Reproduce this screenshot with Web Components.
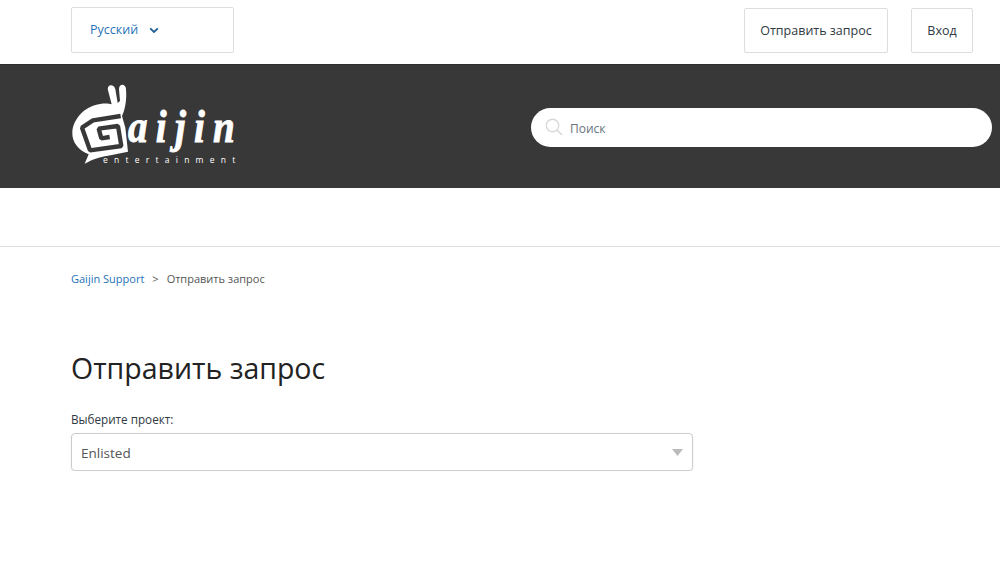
<!DOCTYPE html>
<html lang="ru"><head><meta charset="utf-8"><title>Отправить запрос</title>
<style>
html,body{margin:0;padding:0;background:#fff;font-family:"Open Sans","Noto Sans",sans-serif;overflow:hidden}
</style></head><body>
<g-top></g-top><g-hero></g-hero><g-crumbs></g-crumbs><g-form></g-form>
<script>
function def(n,html){customElements.define(n,class extends HTMLElement{constructor(){super();this.attachShadow({mode:'open'}).innerHTML=html}})}
const btn=`display:flex;align-items:center;justify-content:center;box-sizing:border-box;border:1px solid #ddd;border-radius:2px;background:#fff;height:46px;font-size:12.5px;color:#2f3941;`;
def('g-top',`<style>:host{display:flex;height:64px;box-sizing:border-box;padding:7px 27px 0 71px;align-items:flex-start}
.l{${btn}width:163px;justify-content:flex-start;padding:0 0 1px 18px;color:#1f73b7;gap:11px}
.a{${btn}width:144px;margin-left:auto;margin-top:1px;height:45px}.b{${btn}width:62px;margin-left:23px;margin-top:1px;height:45px}
svg{display:block;margin-top:2px}</style>
<div class="l">Русский<svg width="10" height="7" viewBox="0 0 10 7"><path d="M1.2 1.3 5 5 8.8 1.3" fill="none" stroke="#1f5f96" stroke-width="1.8"/></svg></div>
<div class="a">Отправить запрос</div><div class="b">Вход</div>`);
def('g-logo',`<style>:host{display:block;width:190px;height:110px;position:relative;color:#fff}
svg{position:absolute;left:8px;top:10px}
.w{position:absolute;left:68px;top:28px;font:italic 700 46px/56px "Liberation Serif",serif;-webkit-text-stroke:.9px #fff;letter-spacing:9.7px;transform:scaleX(.85);transform-origin:left;white-space:nowrap}
.e{position:absolute;left:43px;top:84px;font:8.5px/10px "Open Sans",sans-serif;letter-spacing:6.25px;white-space:nowrap}</style>
<svg viewBox="0 0 210 258" width="70" height="86"><path fill="#fff" d="M50 248 62 220C30 207 12 182 13 155 14 118 45 83 80 73 100 66 120 66 131 70L120 28C116 8 139 8 142 25L149 66 156 60 153 25C153 6 174 8 174 25 177 60 170 90 162 105L172 140 180 212 120 224C95 227 70 237 50 248Z"/><path fill="none" stroke="#383838" stroke-width="13" stroke-linejoin="bevel" d="M158 105 75 118 42 140 66 208 160 195 150 135 92 143 100 172 125 168"/></svg>
<span class="w">aijin</span><span class="e">entertainment</span>`);
def('g-hero',`<style>:host{display:flex;height:124px;box-sizing:border-box;background:#383838;border-top:1px solid #2e2e2e;padding:6px 8px 0 60px}
.s{margin:37px 0 0 281px;flex:1;height:39px;box-sizing:border-box;background:#fff;border-radius:20px;display:flex;align-items:center;padding:2px 0 0 14px;gap:7px;font-size:12px;color:#68737d}
svg{display:block;margin-top:-3px}</style><g-logo></g-logo>
<div class="s"><svg width="18" height="18" viewBox="0 0 18 18"><circle cx="7.5" cy="7.5" r="6.2" fill="none" stroke="#d8d8d8" stroke-width="1.4"/><path d="M12 12l5 5" stroke="#d8d8d8" stroke-width="1.6"/></svg><span>Поиск</span></div>`);
def('g-crumbs',`<style>:host{display:block;margin-top:58px;border-top:1px solid #ddd;padding:23px 0 0 71px;font-size:11px;line-height:18px;color:#555;height:37px}
a{color:#1f73b7}i{font-style:normal;margin:0 8px}</style><a>Gaijin Support</a><i>&gt;</i>Отправить запрос`);
def('g-form',`<style>:host{display:block;padding:0 0 0 71px;color:#2f3941}
h1{margin:40px 0 0;font-size:28.5px;font-weight:400;line-height:42px;color:#222}
label{display:block;margin-top:21px;font-size:11.7px;line-height:18px;color:#2f3941}
.f{margin-top:5px;width:622px;height:38px;box-sizing:border-box;border:1px solid #ccc;border-radius:4px;box-shadow:0 1px 2px rgba(0,0,0,.1);display:flex;align-items:center;justify-content:space-between;padding:1px 9px 0;font-size:13.5px;color:#555}
svg{display:block;margin-top:-1px}</style><h1>Отправить запрос</h1><label>Выберите проект:</label>
<div class="f">Enlisted<svg width="11" height="7" viewBox="0 0 11 7"><path d="M0 0h11L5.5 7z" fill="#bbb"/></svg></div>`);
</script></body></html>
